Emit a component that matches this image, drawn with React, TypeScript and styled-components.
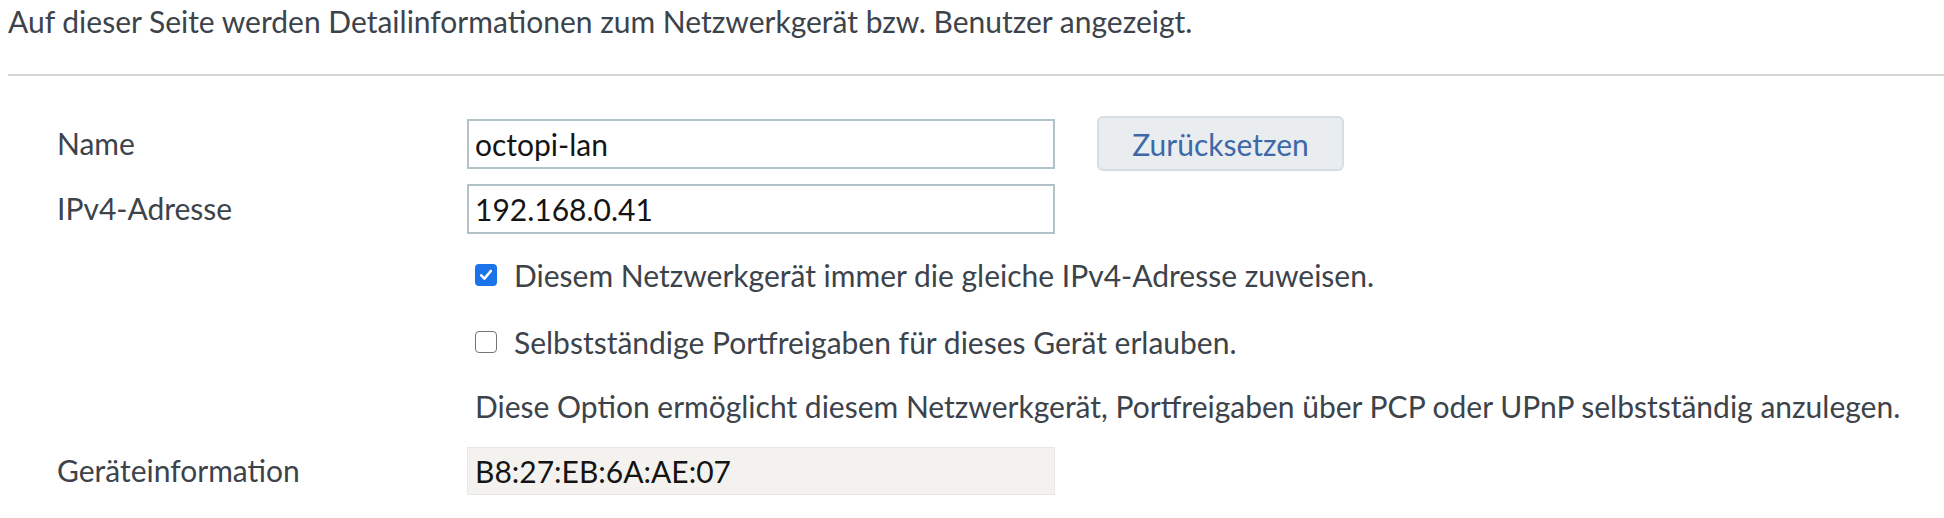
import React from "react";
import styled, { createGlobalStyle } from "styled-components";

const GlobalStyle = createGlobalStyle`
  body {
    margin: 0;
    background: #ffffff;
    font-family: Lato, "Liberation Sans", sans-serif;
  }
`;

const Page = styled.div`
  padding-left: 8px;
`;

const Intro = styled.p`
  margin: 0;
  padding-top: 1px;
  font-size: 30px;
  line-height: 41px;
  color: #3c434a;
`;

const Divider = styled.hr`
  margin: 32px 0 0 0;
  border: none;
  border-top: 2px solid #d6d6d6;
  height: 0;
`;

const Form = styled.div`
  display: flex;
  flex-direction: column;
  gap: 16.5px;
  padding-left: 49px;
  margin-top: 40px;
`;

const Row = styled.div<{ $shift?: number }>`
  display: grid;
  grid-template-columns: 410px 1fr;
  align-items: center;
  height: 50px;
  margin-top: ${(p) => p.$shift ?? 0}px;
`;

const Label = styled.span`
  font-size: 30px;
  color: #3c434a;
  margin-top: -2px;
`;

const Field = styled.div`
  display: flex;
  align-items: center;
`;

const TextInput = styled.input`
  box-sizing: border-box;
  width: 588px;
  height: 50px;
  border: 2px solid #b3c1c9;
  padding: 0 6px;
  font-family: inherit;
  font-size: 30px;
  color: #141414;
  background: #ffffff;
  outline: none;
`;

const ResetButton = styled.button`
  box-sizing: border-box;
  margin-left: 42px;
  width: 247px;
  height: 55px;
  border: 2px solid #d7dee3;
  border-radius: 6px;
  background: #e9edf0;
  color: #3e68a6;
  font-family: inherit;
  font-size: 30px;
  cursor: pointer;
`;

const CheckLabel = styled.label`
  display: flex;
  align-items: center;
  gap: 17px;
  padding-left: 8px;
  font-size: 30px;
  color: #3c434a;
  cursor: pointer;
`;

const HiddenInput = styled.input`
  position: absolute;
  opacity: 0;
  width: 0;
  height: 0;
`;

const Box = styled.span<{ $checked: boolean }>`
  box-sizing: border-box;
  width: 22px;
  height: 22px;
  border-radius: 4px;
  display: flex;
  align-items: center;
  justify-content: center;
  background: ${(p) => (p.$checked ? "#1a73e8" : "#ffffff")};
  border: ${(p) => (p.$checked ? "none" : "1.5px solid #767676")};
`;

const Hint = styled.span`
  padding-left: 8px;
  font-size: 30px;
  color: #3c434a;
  white-space: nowrap;
`;

const InfoBox = styled.div`
  box-sizing: border-box;
  width: 588px;
  height: 48px;
  display: flex;
  align-items: center;
  padding-left: 7px;
  background: #f3f2ef;
  border: 1px solid #e8e7e3;
  font-size: 30px;
  color: #141414;
`;

function Checkbox({ checked, children }: { checked: boolean; children: React.ReactNode }) {
  const [on, setOn] = React.useState(checked);
  return (
    <CheckLabel>
      <HiddenInput type="checkbox" checked={on} onChange={() => setOn(!on)} />
      <Box $checked={on}>
        {on && (
          <svg width="16" height="16" viewBox="0 0 16 16" fill="none">
            <path d="M3.2 8.4 L6.4 11.6 L12.8 4" stroke="#ffffff" strokeWidth="2.6" strokeLinecap="round" strokeLinejoin="round" />
          </svg>
        )}
      </Box>
      {children}
    </CheckLabel>
  );
}

export default function App() {
  return (
    <Page>
      <GlobalStyle />
      <Intro>Auf dieser Seite werden Detailinformationen zum Netzwerkgerät bzw. Benutzer angezeigt.</Intro>
      <Divider />
      <Form>
        <Row>
          <Label>Name</Label>
          <Field>
            <TextInput defaultValue="octopi-lan" />
            <ResetButton type="button">Zurücksetzen</ResetButton>
          </Field>
        </Row>
        <Row $shift={1}>
          <Label>IPv4-Adresse</Label>
          <Field>
            <TextInput defaultValue="192.168.0.41" />
          </Field>
        </Row>
        <Row>
          <span />
          <Checkbox checked>Diesem Netzwerkgerät immer die gleiche IPv4-Adresse zuweisen.</Checkbox>
        </Row>
        <Row>
          <span />
          <Checkbox checked={false}>Selbstständige Portfreigaben für dieses Gerät erlauben.</Checkbox>
        </Row>
        <Row $shift={-2}>
          <span />
          <Hint>
            Diese Option ermöglicht diesem Netzwerkgerät, Portfreigaben über PCP oder UPnP selbstständig anzulegen.
          </Hint>
        </Row>
        <Row $shift={-2}>
          <Label>Geräteinformation</Label>
          <Field>
            <InfoBox>B8:27:EB:6A:AE:07</InfoBox>
          </Field>
        </Row>
      </Form>
    </Page>
  );
}
